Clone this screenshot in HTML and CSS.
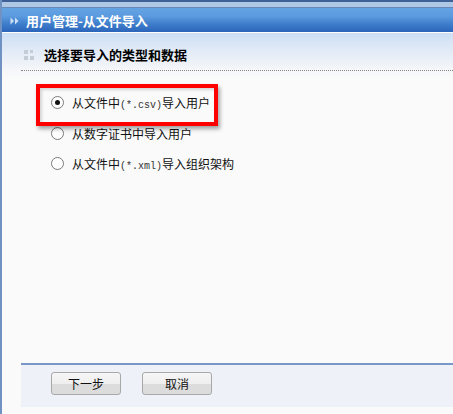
FILE: index.html
```html
<!DOCTYPE html>
<html>
<head>
<meta charset="utf-8">
<link rel="stylesheet" href="styles.css">
</head>
<body>
<div class="frame">
  <div class="topstrip"></div>
  <div class="header">
    <svg class="chev" width="10" height="8" viewBox="0 0 10 8">
      <path d="M0.5 0.5 L4 4 L0.5 7.5 Z" fill="#cfe0f6"/>
      <path d="M5 0.5 L8.5 4 L5 7.5 Z" fill="#cfe0f6"/>
    </svg>
    <span class="htitle">用户管理-从文件导入</span>
  </div>
  <div class="body">
    <div class="section">
      <span class="dots"><i></i><i class="s"></i><i></i><i></i></span>
      <span class="stitle">选择要导入的类型和数据</span>
    </div>
    <div class="options">
      <label class="opt hl"><span class="radio on"></span><span>从文件中<span class="mono">(*.csv)</span>导入用户</span></label>
      <label class="opt"><span class="radio"></span><span>从数字证书中导入用户</span></label>
      <label class="opt"><span class="radio"></span><span>从文件中<span class="mono">(*.xml)</span>导入组织架构</span></label>
    </div>
    <div class="spacer"></div>
    <div class="footer">
      <button class="btn">下一步</button>
      <button class="btn">取消</button>
    </div>
  </div>
</div>
</body>
</html>
```

FILE: styles.css
```css
html, body { margin: 0; padding: 0; }
body {
  background: #fafafa;
  font-family: "Noto Sans CJK SC", "Liberation Sans", sans-serif;
  font-size: 12px;
  color: #000;
}
.frame {
  height: 414px;
  border-left: 2px solid #7092c2;
  display: flex;
  flex-direction: column;
  box-sizing: border-box;
}
.topstrip {
  height: 8px;
  box-sizing: border-box;
  border-top: 2px solid #3f6197;
  border-bottom: 1px solid #6a88b6;
  background: #aec7e4;
}
.header {
  height: 24px;
  background: linear-gradient(#64a3e3 0%, #5b9ade 35%, #3f7fcc 65%, #2c65ba 100%);
  border-bottom: 1px solid #ffffff;
  display: flex;
  align-items: center;
  padding-left: 8px;
}
.chev { margin-right: 6px; margin-top: 1px; }
.htitle {
  color: #fff;
  font-weight: bold;
  font-size: 13px;
}
.body {
  flex: 1;
  display: flex;
  flex-direction: column;
  background: linear-gradient(#cddff5 0px, #e4ecf7 20px, #f6f7f9 38px, #fafafa 45px);
}
.section {
  margin-left: 19px;
  height: 38px;
  border-bottom: 1px dotted #888;
  display: flex;
  align-items: center;
  padding-top: 6px;
  box-sizing: border-box;
}
.dots {
  display: grid;
  grid-template-columns: 4px 4px;
  gap: 2px;
  margin-left: 3px;
  margin-right: 10px;
  margin-top: 1px;
}
.dots i { width: 4px; height: 4px; background: #c4ccd6; }
.dots i.s { width: 3px; height: 3px; }
.stitle { font-weight: bold; font-size: 13px; }
.options {
  display: flex;
  flex-direction: column;
  padding-left: 34px;
  padding-top: 13px;
  align-items: flex-start;
}
.opt {
  display: flex;
  align-items: center;
  height: 30px;
  padding-left: 15px;
  font-size: 12px;
  color: #111;
  white-space: nowrap;
}
.opt.hl {
  height: 42px;
  width: 182px;
  box-sizing: border-box;
  border: 4px solid #ff0000;
  padding-left: 11px;
  padding-bottom: 6px;
  margin-bottom: -8px;
  position: relative;
  z-index: 1;
  box-shadow: 2px 3px 4px rgba(0,0,0,0.35), inset 2px 2px 3px rgba(0,0,0,0.15);
}
.radio {
  width: 11px;
  height: 11px;
  border-radius: 50%;
  border: 1px solid #7a7a7a;
  background: #fff;
  margin-right: 8px;
  position: relative;
  flex: none;
}
.radio.on::after {
  content: "";
  position: absolute;
  left: 3px; top: 3px;
  width: 5px; height: 5px;
  border-radius: 50%;
  background: #111;
}
.mono {
  font-family: "Liberation Mono", monospace;
  font-size: 10px;
  color: #333;
}
.spacer { flex: 1; }
.footer {
  margin-left: 19px;
  margin-bottom: 7px;
  height: 44px;
  box-sizing: border-box;
  border-top: 2px solid #7898c9;
  background: #eef2f8;
  display: flex;
  align-items: flex-start;
  padding-left: 30px;
  padding-top: 7px;
  gap: 21px;
}
.btn {
  width: 70px;
  height: 23px;
  border: 1px solid #a8a8a8;
  border-radius: 3px;
  background: linear-gradient(#f6f6f6 0%, #efefef 50%, #dcdcdc 55%, #dcdcdc 100%);
  font-family: "Noto Sans CJK SC", sans-serif;
  font-size: 12px;
  color: #111;
  padding: 0;
}
```
